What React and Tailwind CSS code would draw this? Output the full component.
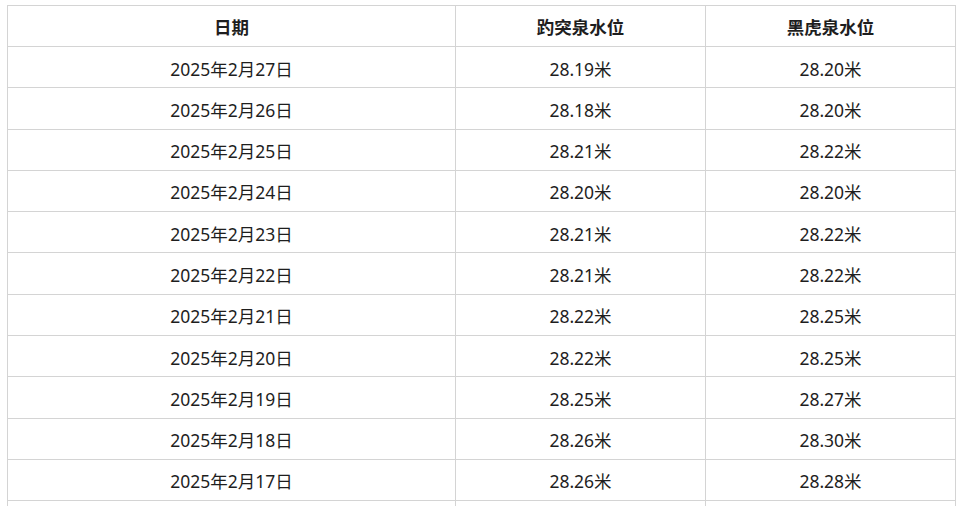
const rows = [
  ['2025年2月27日', '28.19米', '28.20米'],
  ['2025年2月26日', '28.18米', '28.20米'],
  ['2025年2月25日', '28.21米', '28.22米'],
  ['2025年2月24日', '28.20米', '28.20米'],
  ['2025年2月23日', '28.21米', '28.22米'],
  ['2025年2月22日', '28.21米', '28.22米'],
  ['2025年2月21日', '28.22米', '28.25米'],
  ['2025年2月20日', '28.22米', '28.25米'],
  ['2025年2月19日', '28.25米', '28.27米'],
  ['2025年2月18日', '28.26米', '28.30米'],
  ['2025年2月17日', '28.26米', '28.28米'],
];

export default function App() {
  return (
    <div className="h-screen overflow-hidden bg-white pt-[5px] pl-[7px] text-[#1e1e1e] font-['Noto_Sans','Noto_Sans_CJK_SC',sans-serif]">
      <table className="w-[949px] table-fixed border-collapse text-[17.5px]">
        <colgroup>
          <col className="w-[448px]" />
          <col className="w-[250px]" />
          <col className="w-[250px]" />
        </colgroup>
        <thead>
          <tr className="h-[41px]">
            <th className="border border-[#d4d4d4] pt-[3px] font-bold">日期</th>
            <th className="border border-[#d4d4d4] pt-[3px] font-bold">趵突泉水位</th>
            <th className="border border-[#d4d4d4] pt-[3px] font-bold">黑虎泉水位</th>
          </tr>
        </thead>
        <tbody>
          {rows.map((r) => (
            <tr key={r[0]} className="h-[41.3px]">
              {r.map((c, i) => (
                <td key={i} className="border border-[#d4d4d4] pt-[3px] text-center">
                  {c}
                </td>
              ))}
            </tr>
          ))}
          {/* next row, only its top edge shows in the frame */}
          <tr className="h-[41.3px]">
            <td className="border border-[#d4d4d4]" />
            <td className="border border-[#d4d4d4]" />
            <td className="border border-[#d4d4d4]" />
          </tr>
        </tbody>
      </table>
    </div>
  );
}
